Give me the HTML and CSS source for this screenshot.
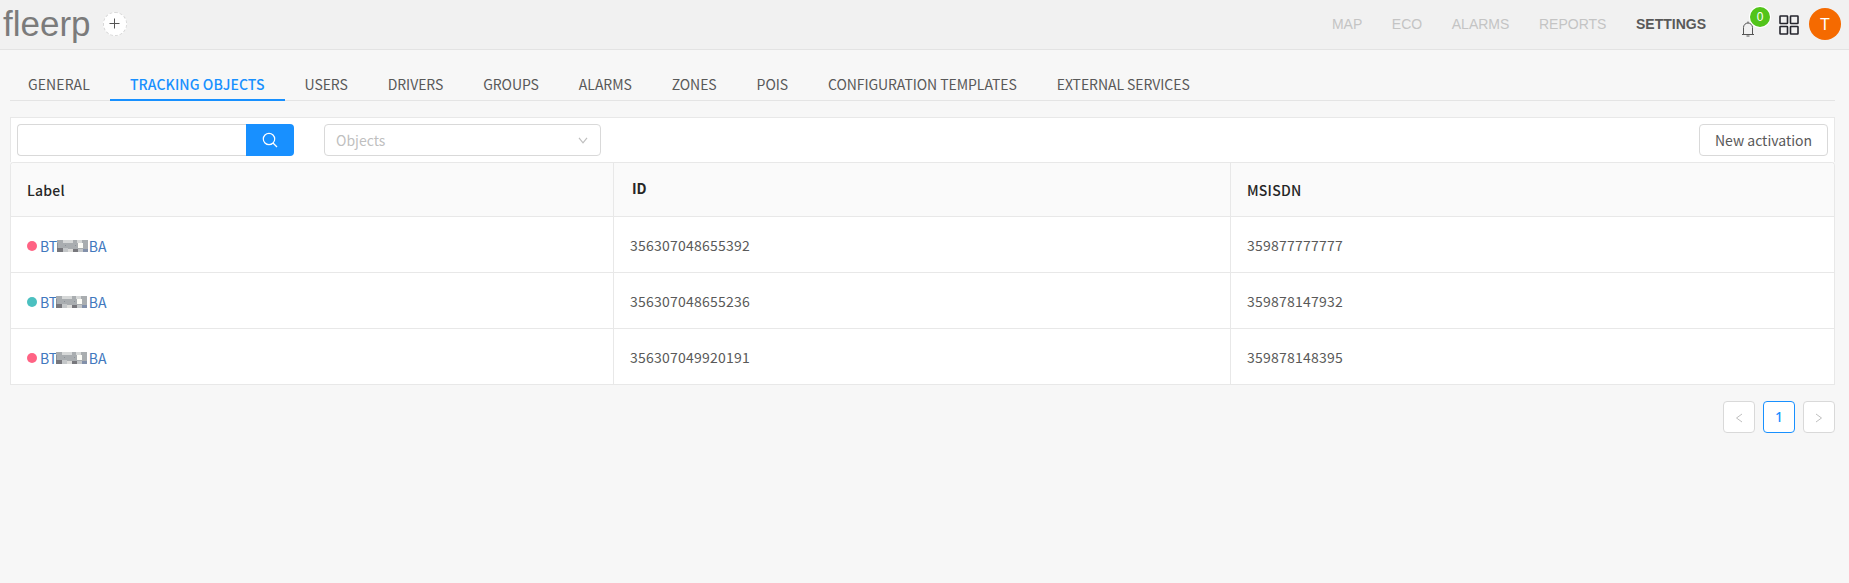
FILE: index.html
```html
<!DOCTYPE html>
<html lang="en">
<head>
<meta charset="utf-8">
<title>fleerp</title>
<link rel="stylesheet" href="styles.css">
</head>
<body>
<svg width="0" height="0" class="defs">
  <symbol id="mosaic" viewBox="0 0 31 12">
    <path fill="#a9adb0" d="M0 0h31v12H0z"/>
    <path fill="#d6d8d8" d="M6 0h10v3H6zM20 0h5v3h-5z"/>
    <path fill="#fbfbf6" d="M21 3h5v5h-5z"/>
    <path fill="#77777c" d="M0 8h6v4H0zM16 9h5v3h-5z"/>
    <path fill="#c3c6c8" d="M6 8h5v4H6zM21 9h5v3h-5z"/>
    <path fill="#dcdcda" d="M11 9h5v3h-5z"/>
    <path fill="#8290aa" d="M26 9h5v3h-5z"/>
    <path fill="#8b9198" d="M8 5h1v1H8zM18 5h1v1h-1zM0 3h1v5H0z"/>
  </symbol>
</svg>
<header class="topbar">
  <div class="brand">fleerp</div>
  <button class="add"><svg width="12" height="12" viewBox="0 0 12 12"><path d="M5.500 0.500v10M.5 5.500h10" stroke="#555" stroke-width="1"/></svg></button>
  <nav class="mainnav">
    <a>MAP</a><a>ECO</a><a>ALARMS</a><a>REPORTS</a><a class="current">SETTINGS</a>
  </nav>
  <div class="bell">
    <svg width="14" height="16" viewBox="0 0 14 16" fill="none" stroke="#555"><path d="M2.500 13V6.500a4.500 4.500 0 0 1 9 0V13M1 13.500h12M7 .5v1.500M5.500 15h3"/></svg>
    <span class="badge">0</span>
  </div>
  <svg class="apps" width="20" height="20" viewBox="0 0 20 20" fill="none" stroke="#26262e" stroke-width="1.600"><rect x="1" y="1" width="7.500" height="7.500" rx=".5"/><rect x="11.500" y="1" width="7.500" height="7.500" rx=".5"/><rect x="1" y="11.500" width="7.500" height="7.500" rx=".5"/><rect x="11.500" y="11.500" width="7.500" height="7.500" rx=".5"/></svg>
  <div class="avatar">T</div>
</header>
<main class="page">
  <nav class="tabs">
    <a>GENERAL</a><a class="active">TRACKING OBJECTS</a><a>USERS</a><a>DRIVERS</a><a>GROUPS</a><a>ALARMS</a><a>ZONES</a><a>POIS</a><a>CONFIGURATION TEMPLATES</a><a>EXTERNAL SERVICES</a>
  </nav>
  <section class="toolbar">
    <div class="search">
      <input class="search-input" type="text">
      <button class="search-btn"><svg width="16" height="16" viewBox="0 0 16 16" fill="none" stroke="#fff" stroke-width="1.200"><circle cx="7" cy="7" r="5.700"/><path d="M11 11l4 4"/></svg></button>
    </div>
    <div class="select"><span>Objects</span><svg width="10" height="7" viewBox="0 0 10 7" fill="none" stroke="#bfbfbf" stroke-width="1.200"><path d="M1 .8l4 5 4-5"/></svg></div>
    <button class="activate">New activation</button>
  </section>
  <section class="table">
    <div class="row head"><div class="cell">Label</div><div class="cell id">ID</div><div class="cell">MSISDN</div></div>
    <div class="row"><div class="cell label"><i class="dot"></i><span>BT</span><svg class="mask"><use href="#mosaic"/></svg><span>BA</span></div><div class="cell">356307048655392</div><div class="cell">359877777777</div></div>
    <div class="row"><div class="cell label"><i class="dot online"></i><span>BT</span><svg class="mask shifted"><use href="#mosaic"/></svg><span>BA</span></div><div class="cell">356307048655236</div><div class="cell">359878147932</div></div>
    <div class="row"><div class="cell label"><i class="dot"></i><span>BT</span><svg class="mask shifted"><use href="#mosaic"/></svg><span>BA</span></div><div class="cell">356307049920191</div><div class="cell">359878148395</div></div>
  </section>
  <div class="pager">
    <button><svg width="8" height="10" viewBox="0 0 8 10"><path d="M7 1L1.500 5 7 9"/></svg></button>
    <button class="active">1</button>
    <button><svg width="8" height="10" viewBox="0 0 8 10"><path d="M1 1l5.500 4L1 9"/></svg></button>
  </div>
</main>
</body>
</html>
```
FILE: styles.css
```css
* { box-sizing: border-box; }
body {
  margin: 0;
  background: #f7f7f7;
  color: #595959;
  font: 14px/22px "Noto Sans CJK SC", sans-serif;
}
button { font: inherit; color: inherit; padding: 0; display: flex; align-items: center; justify-content: center; }
.defs { position: absolute; }
.topbar {
  display: flex;
  align-items: center;
  height: 50px;
  padding: 0 8px 2px 3px;
  background: #f1f1f1;
  border-bottom: 1px solid #e3e3e3;
  font-family: "Liberation Sans", sans-serif;
}
.brand { width: 100px; font-size: 35px; line-height: 48px; color: #7b7b7b; }
.add { width: 24px; height: 24px; border: 1px dashed #d9d9d9; border-radius: 50%; background: #fff; }
.mainnav { display: flex; gap: 29.6px; margin-left: auto; color: #c4c4c4; }
.mainnav .current { color: #595959; font-weight: bold; }
.bell { position: relative; width: 14px; height: 16px; margin: 10px 0 0 35px; }
.bell svg { display: block; }
.badge {
  position: absolute;
  left: 9px;
  top: -14px;
  width: 20px;
  height: 20px;
  border-radius: 10px;
  box-shadow: 0 0 0 1px #fff;
  background: #52c41a;
  color: #fff;
  font-size: 12px;
  line-height: 21px;
  text-align: center;
}
.apps { margin: 2px 10px 0 24px; }
.avatar { width: 32px; height: 32px; border-radius: 50%; background: #f56a00; color: #fff; font-size: 16px; line-height: 33px; text-align: center; }
.page { padding: 13px 14px 0 10px; }
.tabs { display: flex; height: 38px; border-bottom: 1px solid #e4e4e4; }
.tabs a { height: 38px; padding: 0 20px; line-height: 43px; letter-spacing: -.07px; white-space: nowrap; }
.tabs a:first-child { padding-left: 18px; letter-spacing: .1px; }
.tabs .active { color: #1890ff; font-weight: 500; letter-spacing: .09px; border-bottom: 2px solid #1890ff; }
.toolbar {
  display: flex;
  align-items: flex-start;
  height: 45px;
  margin-top: 16px;
  padding: 6px;
  background: #fff;
  border: 1px solid #e8e8e8;
  border-bottom: 0;
}
.search { display: flex; }
.search-input { width: 229px; height: 32px; border: 1px solid #d9d9d9; border-right: 0; border-radius: 4px 0 0 4px; outline: none; }
.search-btn { width: 48px; height: 32px; border: 0; border-radius: 0 4px 4px 0; background: #1890ff; }
.select {
  display: flex;
  align-items: center;
  justify-content: space-between;
  width: 277px;
  height: 32px;
  margin-left: 30px;
  padding: 0 12px 0 11px;
  border: 1px solid #d9d9d9;
  border-radius: 4px;
  color: #bfbfbf;
}
.activate { width: 129px; height: 32px; margin-left: auto; border: 1px solid #d9d9d9; border-radius: 4px; background: #fff; }
.table { border: 1px solid #e8e8e8; border-bottom: 0; border-radius: 4px 4px 0 0; background: #fff; overflow: hidden; }
.row { display: grid; grid-template-columns: 603px 617px 1fr; height: 56px; border-bottom: 1px solid #e8e8e8; }
.cell { display: flex; align-items: center; padding: 1px 16px 0; border-right: 1px solid #e8e8e8; letter-spacing: .23px; }
.cell:last-child { border-right: 0; }
.head { height: 54px; background: #fafafa; color: #262626; font-weight: 500; }
.head .id { padding: 0 18px 3px; font-weight: 700; letter-spacing: 0; }
.label { padding-top: 3px; color: #4178be; letter-spacing: 0; }
.dot { width: 10px; height: 10px; margin: 0 3px 0 0; border-radius: 50%; background: #ff6384; }
.online { background: #4bc0c0; }
.mask { width: 31px; height: 12px; margin: 0 .5px 0 0; }
.shifted { margin: 0 1.5px 0 -1px; }
.pager { display: flex; justify-content: flex-end; gap: 8px; margin-top: 16px; }
.pager button { width: 32px; height: 32px; border: 1px solid #d9d9d9; border-radius: 4px; background: #fff; }
.pager svg { margin-top: 2px; }
.pager path { fill: none; stroke: #bfbfbf; }
.pager .active { padding-bottom: 1px; border-color: #1890ff; color: #1890ff; font-family: "Noto Sans", sans-serif; font-weight: 500; }
```
